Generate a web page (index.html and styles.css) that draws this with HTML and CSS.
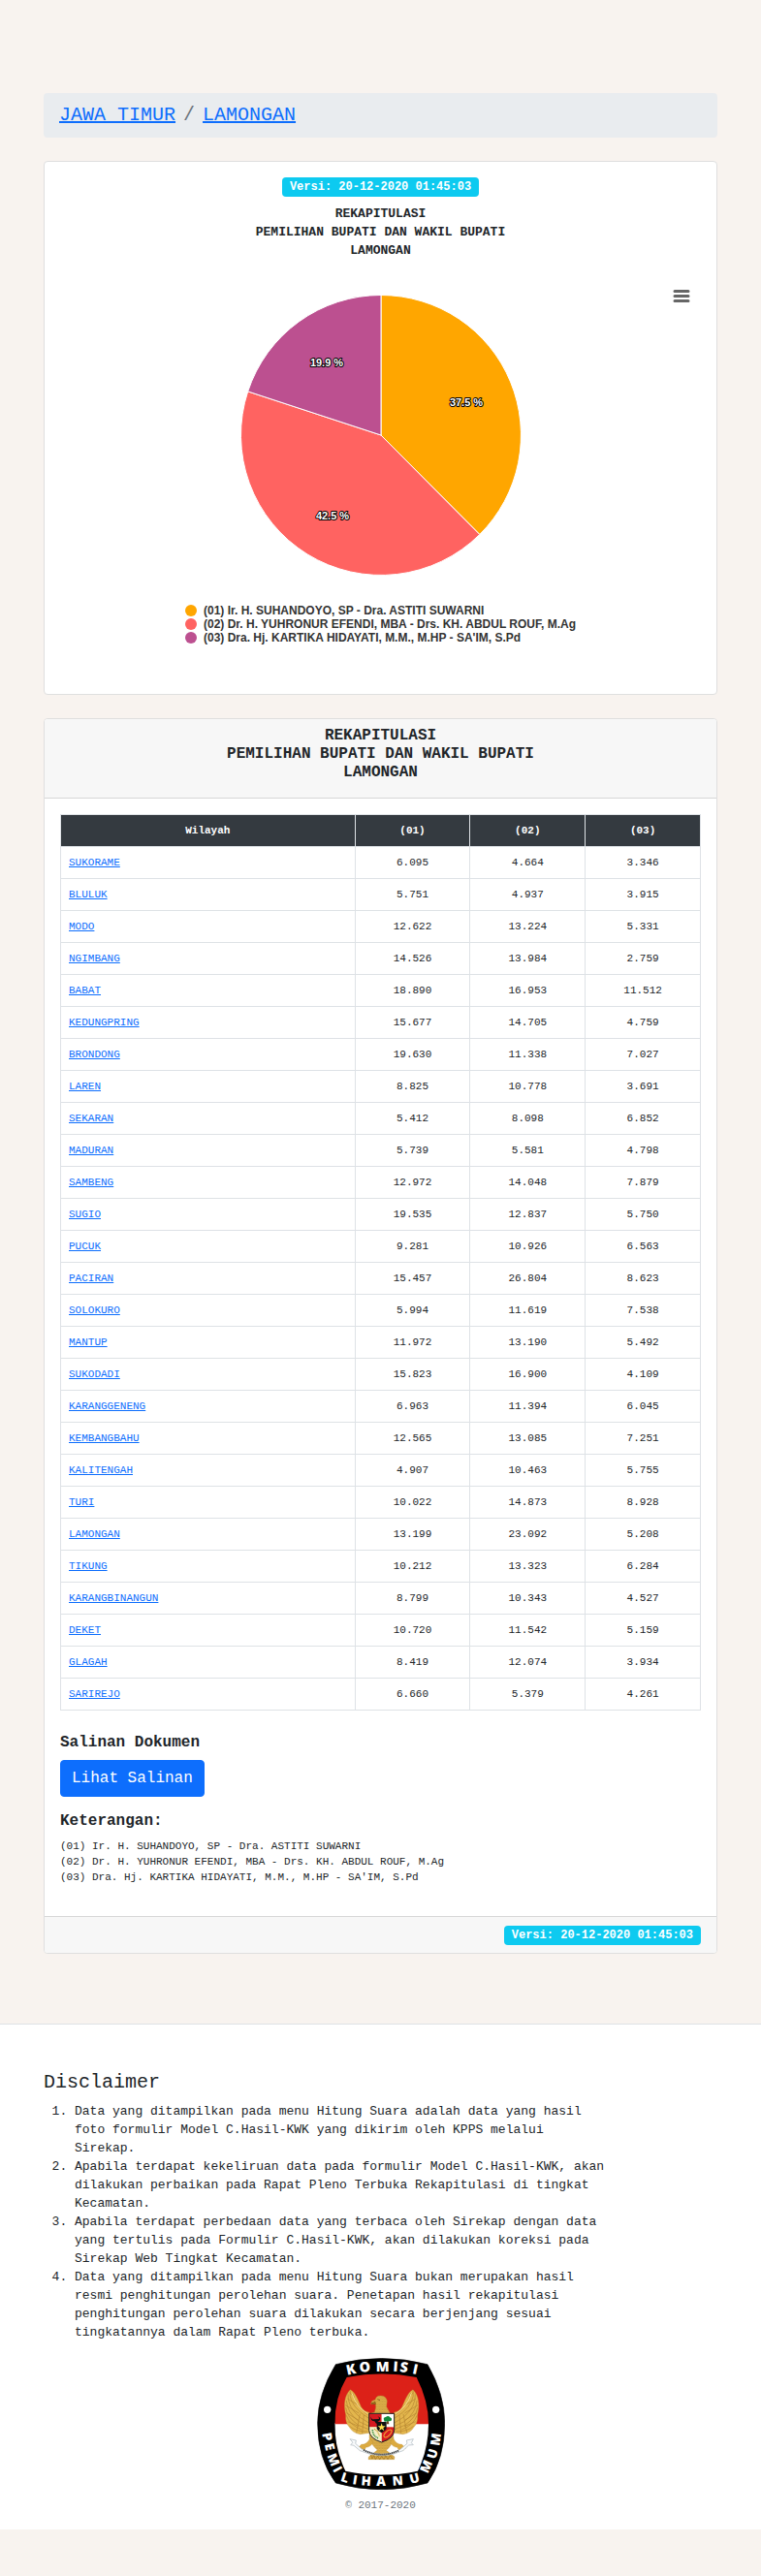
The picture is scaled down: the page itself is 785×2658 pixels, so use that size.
FILE: index.html
```html
<!DOCTYPE html>
<html lang="id">
<head>
<meta charset="utf-8">
<meta name="viewport" content="width=device-width, initial-scale=1">
<title>Rekapitulasi - Lamongan</title>
<link rel="stylesheet" href="styles.css">
</head>
<body>
<main class="container">
  <nav class="breadcrumb" aria-label="breadcrumb">
    <a href="#">JAWA TIMUR</a><span class="breadcrumb-sep">/</span><a href="#">LAMONGAN</a>
  </nav>

  <section class="card chart-card">
    <span class="badge">Versi: 20-12-2020 01:45:03</span>
    <h2 class="chart-title">REKAPITULASI<br>PEMILIHAN BUPATI DAN WAKIL BUPATI<br>LAMONGAN</h2>
    <div class="chart">
      <button class="chart-menu" type="button" aria-label="Menu">
        <svg width="18" height="14" viewBox="0 0 18 14"><path d="M2 1.500H16M2 6.500H16M2 11.500H16" stroke="#666" stroke-width="3" stroke-linecap="round"/></svg>
      </button>
      <svg class="pie" width="292" height="292" viewBox="0 0 292 292">
        <g stroke="#fff" stroke-width="1" stroke-linejoin="round">
          <path fill="#ffa600" d="M146 146V1.500A144.500 144.500 0 0 1 247.800 248.500Z"/>
          <path fill="#ff6361" d="M146 146L247.800 248.500A144.500 144.500 0 0 1 8.700 100.900Z"/>
          <path fill="#bc5090" d="M146 146L8.700 100.900A144.500 144.500 0 0 1 146 1.500Z"/>
        </g>
        <g class="pie-label" text-anchor="middle">
          <text x="234" y="116">37.5 %</text>
          <text x="96" y="233">42.5 %</text>
          <text x="90" y="75">19.9 %</text>
        </g>
      </svg>
      <ul class="legend">
        <li><span class="dot dot-1"></span>(01) Ir. H. SUHANDOYO, SP - Dra. ASTITI SUWARNI</li>
        <li><span class="dot dot-2"></span>(02) Dr. H. YUHRONUR EFENDI, MBA - Drs. KH. ABDUL ROUF, M.Ag</li>
        <li><span class="dot dot-3"></span>(03) Dra. Hj. KARTIKA HIDAYATI, M.M., M.HP - SA'IM, S.Pd</li>
      </ul>
    </div>
  </section>

  <section class="card">
    <header class="card-header">
      <h2 class="heading">REKAPITULASI<br>PEMILIHAN BUPATI DAN WAKIL BUPATI<br>LAMONGAN</h2>
    </header>
    <div class="card-body">
      <table class="results">
        <thead><tr><th class="col-area">Wilayah</th><th>(01)</th><th>(02)</th><th>(03)</th></tr></thead>
        <tbody>
          <tr><td><a href="#">SUKORAME</a></td><td>6.095</td><td>4.664</td><td>3.346</td></tr>
          <tr><td><a href="#">BLULUK</a></td><td>5.751</td><td>4.937</td><td>3.915</td></tr>
          <tr><td><a href="#">MODO</a></td><td>12.622</td><td>13.224</td><td>5.331</td></tr>
          <tr><td><a href="#">NGIMBANG</a></td><td>14.526</td><td>13.984</td><td>2.759</td></tr>
          <tr><td><a href="#">BABAT</a></td><td>18.890</td><td>16.953</td><td>11.512</td></tr>
          <tr><td><a href="#">KEDUNGPRING</a></td><td>15.677</td><td>14.705</td><td>4.759</td></tr>
          <tr><td><a href="#">BRONDONG</a></td><td>19.630</td><td>11.338</td><td>7.027</td></tr>
          <tr><td><a href="#">LAREN</a></td><td>8.825</td><td>10.778</td><td>3.691</td></tr>
          <tr><td><a href="#">SEKARAN</a></td><td>5.412</td><td>8.098</td><td>6.852</td></tr>
          <tr><td><a href="#">MADURAN</a></td><td>5.739</td><td>5.581</td><td>4.798</td></tr>
          <tr><td><a href="#">SAMBENG</a></td><td>12.972</td><td>14.048</td><td>7.879</td></tr>
          <tr><td><a href="#">SUGIO</a></td><td>19.535</td><td>12.837</td><td>5.750</td></tr>
          <tr><td><a href="#">PUCUK</a></td><td>9.281</td><td>10.926</td><td>6.563</td></tr>
          <tr><td><a href="#">PACIRAN</a></td><td>15.457</td><td>26.804</td><td>8.623</td></tr>
          <tr><td><a href="#">SOLOKURO</a></td><td>5.994</td><td>11.619</td><td>7.538</td></tr>
          <tr><td><a href="#">MANTUP</a></td><td>11.972</td><td>13.190</td><td>5.492</td></tr>
          <tr><td><a href="#">SUKODADI</a></td><td>15.823</td><td>16.900</td><td>4.109</td></tr>
          <tr><td><a href="#">KARANGGENENG</a></td><td>6.963</td><td>11.394</td><td>6.045</td></tr>
          <tr><td><a href="#">KEMBANGBAHU</a></td><td>12.565</td><td>13.085</td><td>7.251</td></tr>
          <tr><td><a href="#">KALITENGAH</a></td><td>4.907</td><td>10.463</td><td>5.755</td></tr>
          <tr><td><a href="#">TURI</a></td><td>10.022</td><td>14.873</td><td>8.928</td></tr>
          <tr><td><a href="#">LAMONGAN</a></td><td>13.199</td><td>23.092</td><td>5.208</td></tr>
          <tr><td><a href="#">TIKUNG</a></td><td>10.212</td><td>13.323</td><td>6.284</td></tr>
          <tr><td><a href="#">KARANGBINANGUN</a></td><td>8.799</td><td>10.343</td><td>4.527</td></tr>
          <tr><td><a href="#">DEKET</a></td><td>10.720</td><td>11.542</td><td>5.159</td></tr>
          <tr><td><a href="#">GLAGAH</a></td><td>8.419</td><td>12.074</td><td>3.934</td></tr>
          <tr><td><a href="#">SARIREJO</a></td><td>6.660</td><td>5.379</td><td>4.261</td></tr>
        </tbody>
      </table>
      <h3 class="heading">Salinan Dokumen</h3>
      <button class="btn" type="button">Lihat Salinan</button>
      <h3 class="heading">Keterangan:</h3>
      <p class="notes">(01) Ir. H. SUHANDOYO, SP - Dra. ASTITI SUWARNI<br>(02) Dr. H. YUHRONUR EFENDI, MBA - Drs. KH. ABDUL ROUF, M.Ag<br>(03) Dra. Hj. KARTIKA HIDAYATI, M.M., M.HP - SA'IM, S.Pd</p>
    </div>
    <footer class="card-footer"><span class="badge">Versi: 20-12-2020 01:45:03</span></footer>
  </section>
</main>

<footer class="site-footer">
  <div class="disclaimer">
    <h2 class="disclaimer-title">Disclaimer</h2>
    <ol class="disclaimer-list">
      <li>Data yang ditampilkan pada menu Hitung Suara adalah data yang hasil foto formulir Model C.Hasil-KWK yang dikirim oleh KPPS melalui Sirekap.</li>
      <li>Apabila terdapat kekeliruan data pada formulir Model C.Hasil-KWK, akan dilakukan perbaikan pada Rapat Pleno Terbuka Rekapitulasi di tingkat Kecamatan.</li>
      <li>Apabila terdapat perbedaan data yang terbaca oleh Sirekap dengan data yang tertulis pada Formulir C.Hasil-KWK, akan dilakukan koreksi pada Sirekap Web Tingkat Kecamatan.</li>
      <li>Data yang ditampilkan pada menu Hitung Suara bukan merupakan hasil resmi penghitungan perolehan suara. Penetapan hasil rekapitulasi penghitungan perolehan suara dilakukan secara berjenjang sesuai tingkatannya dalam Rapat Pleno terbuka.</li>
    </ol>
  </div>
  <div class="brand">
    <svg class="logo" width="132" height="136" viewBox="50 38 396 408" role="img" aria-label="Komisi Pemilihan Umum">
      <defs>
        <clipPath id="field"><path d="M142 98Q250 76 358 98Q395 170 395 242Q395 320 362 388Q250 412 138 388Q105 320 105 242Q105 160 142 98Z"/></clipPath>
        <clipPath id="shield"><path d="M211 210H289V262Q287 288 250 299Q213 288 211 262Z"/></clipPath>
        <pattern id="scales" width="8" height="8" patternUnits="userSpaceOnUse"><rect width="8" height="8" fill="#e3b64d"/><path d="M0 2Q4 8 8 2M-4 6Q0 12 4 6M4 6Q8 12 12 6" fill="none" stroke="#9d6f20" stroke-width="1"/></pattern>
      </defs>
      <path d="M108 58Q250 21 392 58Q445 150 445 240Q445 350 392 425Q250 466 108 425Q52 350 52 240Q52 150 108 58Z" fill="#000" stroke="#000" stroke-width="2" stroke-linejoin="round"/>
      <g clip-path="url(#field)"><path fill="#fff" d="M100 240H400V410H100Z"/><path fill="#dc2118" d="M100 80H400V243H100Z"/></g>
      <circle cx="82" cy="198" r="11" fill="#fff"/><circle cx="418" cy="198" r="11" fill="#fff"/>
      <g id="wing">
        <path d="M153 136C134 154 132 185 139 214Q137 238 150 252Q162 272 184 274L214 270L211 206Q196 204 187 190C179 174 172 147 153 136Z" fill="#e3b64d" stroke="#b58832" stroke-width="1"/>
        <path d="M153 139Q146 172 185 207L212 226M146 150Q144 190 183 222L212 240M141 170Q143 207 180 235L212 250M139 192Q143 222 178 246L212 260M141 216Q150 245 188 260M151 249Q169 266 206 266M160 146Q165 181 206 214M151 145L167 159M144 164L176 183M138 184L179 209M141 208L179 231M145 235L180 250M183 211L172 270M195 215L190 272" fill="none" stroke="#b58530" stroke-width="2"/>
        <path d="M158 147Q171 190 207 211" fill="none" stroke="#f7df94" stroke-width="3"/>
      </g>
      <use href="#wing" transform="translate(500) scale(-1 1)"/>
      <path d="M228 206Q235 188 230 179L217 181Q217 169 230 168Q233 154 247 155Q263 155 267 171L265 189L277 211L287 286Q280 312 264 324L290 344L289 352H209L210 344L237 323Q218 308 212 285L215 210Z" fill="url(#scales)" stroke="#b58832" stroke-width="1"/>
      <path d="M218 179L230 174L231 181ZM237 166L245 169" fill="#c38a22" stroke="#644310" stroke-width="2"/>
      <path d="M214 287Q205 306 187 306L176 318L185 314L183 325L191 319L196 326L201 315Q216 314 224 299ZM286 287Q295 306 313 306L324 318L315 314L317 325L309 319L304 326L299 315Q284 314 276 299Z" fill="#dbaa40" stroke="#b58832" stroke-width="1"/>
      <path d="M152 289L171 293L169 303L190 321Q250 350 306 322L329 303L327 293L348 289L342 301L348 307L334 308L316 325Q250 356 183 325L164 309L154 307L161 300Z" fill="#f8fafc" stroke="#a9b5bd" stroke-width="2"/>
      <path d="M194 323Q250 351 304 324" fill="none" stroke="#333" stroke-width="5" stroke-dasharray="4 2"/>
      <path d="M216 338L221 350L226 340L231 352L238 341L244 353L250 342L257 352L263 341L269 352L276 340L284 350" fill="none" stroke="#9d6f20" stroke-width="2"/>
      <g clip-path="url(#shield)">
        <path fill="#d71920" d="M211 210H250V252H211ZM250 252H290V300H250Z"/><path fill="#fff" d="M250 210H290V252H250Z"/><path fill="#f6efc7" d="M211 252H250V300H211Z"/>
        <path d="M217 219Q218 230 226 228L242 227Q242 220 237 218Q251 223 243 232L237 236L234 243L228 234Q214 234 217 219Z" fill="#111"/>
        <path d="M267 232H271L273 243H265Z" fill="#70451f"/><path d="M257 230Q254 222 263 221Q270 215 276 222Q285 226 279 233L259 235Z" fill="#128b3a"/>
        <ellipse cx="269" cy="272" rx="15" ry="7" transform="rotate(-45 269 272)" fill="none" stroke="#efad35" stroke-width="3"/>
        <path d="M222 260Q222 280 241 287" fill="none" stroke="#338b42" stroke-width="5" stroke-dasharray="3 2"/><path d="M227 258Q239 263 243 280" fill="none" stroke="#c9a32d" stroke-width="4" stroke-dasharray="3 2"/>
        <path d="M235 236H265V257Q262 265 250 270Q238 265 235 257Z" fill="#111"/>
        <path d="M250 240L253 249H262L255 255L258 264L250 258L242 264L245 255L238 249H247Z" fill="#ffe24a"/>
      </g>
      <path d="M211 210H289V262Q287 288 250 299Q213 288 211 262Z" fill="none" stroke="#222" stroke-width="3"/>
      <g class="logo-text">
        <text font-size="43" x="144 183 232 285 305 344" y="91 83 79 79 80 86" rotate="-12 -7 0 4 8 12">KOMISI</text>
        <text font-size="40" x="66 73 81 98 121 159 186 234 284 310 340 393 417 429" y="272 306 340 383 418 428 432 434 433 430 428 397 353 311" rotate="80 77 68 62 18 9 5 0 -4 0 -14 -66 -74 -82">PEMILIHAN UMUM</text>
      </g>
    </svg>
    <small class="copyright">© 2017-2020</small>
  </div>
</footer>
</body>
</html>
```
FILE: styles.css
```css
*, *::before, *::after { box-sizing: border-box; }

body {
  margin: 0;
  padding: 96px 0 48px;
  background: #f8f3ef;
  color: #212529;
  font: 16px/24px "Liberation Mono", monospace;
}

h2, h3, p, ol, ul { margin: 0; padding: 0; }

a { color: #0d6efd; text-decoration: underline; }

.container {
  display: flex;
  flex-direction: column;
  gap: 24px;
  padding: 0 45px;
}

.breadcrumb {
  padding: 8px 16px;
  border-radius: 4px;
  background: #e9ecef;
  font-size: 20px;
  line-height: 30px;
}

.breadcrumb-sep { padding: 0 8px; color: #6c757d; }

.card {
  border: 1px solid #dfdfdf;
  border-radius: 4px;
  background: #fff;
  overflow: hidden;
}

.badge {
  padding: 4px 8px;
  border-radius: 4px;
  background: #0dcaf0;
  color: #fff;
  font-size: 12px;
  font-weight: 700;
  line-height: 12px;
}

.chart-card {
  display: flex;
  flex-direction: column;
  align-items: center;
  gap: 8px;
  padding: 16px;
}

.chart-title { font-size: 13px; line-height: 19px; text-align: center; }

.chart {
  position: relative;
  display: flex;
  flex-direction: column;
  align-items: center;
  gap: 28px;
  width: 100%;
  padding: 27px 0 35px;
}

.chart-menu {
  position: absolute;
  top: 16px;
  right: 4px;
  display: grid;
  place-items: center;
  width: 32px;
  height: 28px;
  padding: 0;
  border: 0;
  background: none;
}

.pie-label {
  fill: #fff;
  stroke: #000;
  stroke-width: 2px;
  stroke-linejoin: round;
  paint-order: stroke;
  font: 700 11px "Liberation Sans", Arial, sans-serif;
}

.legend {
  list-style: none;
  color: #333;
  font: 700 12px/14px "Liberation Sans", Arial, sans-serif;
}

.legend li { display: flex; align-items: center; gap: 7px; }

.dot { width: 12px; height: 12px; border-radius: 50%; }
.dot-1 { background: #ffa600; }
.dot-2 { background: #ff6361; }
.dot-3 { background: #bc5090; }

.heading { margin-bottom: 8px; font-size: 16px; line-height: 19px; }

.card-header {
  padding: 8px 16px;
  border-bottom: 1px solid #d7d7d7;
  background: #f7f7f7;
  text-align: center;
}

.card-body { padding: 16px 16px 32px; }

.results {
  width: 100%;
  margin-bottom: 24px;
  border-collapse: collapse;
  table-layout: fixed;
  font-size: 11px;
  line-height: 16px;
  text-align: center;
}

.results th, .results td { padding: 8px; border: 1px solid #dee2e6; }
.results th { background: #343a40; color: #fff; }
.results td:first-child { text-align: left; }
.col-area { width: 46%; }

.btn {
  display: block;
  margin-bottom: 16px;
  padding: 6px 11px;
  border: 1px solid #0d6efd;
  border-radius: 4px;
  background: #0d6efd;
  color: #fff;
  font: inherit;
}

.notes { font-size: 11px; line-height: 16px; }

.card-footer {
  display: flex;
  align-items: center;
  justify-content: flex-end;
  min-height: 38px;
  padding: 8px 16px;
  border-top: 1px solid #d7d7d7;
  background: #f7f7f7;
}

.site-footer {
  margin-top: 72px;
  padding: 48px 45px 16px;
  border-top: 1px solid #dee2e6;
  background: #fff;
}

.disclaimer { width: 84%; }
.disclaimer-title { margin-bottom: 8px; font-size: 20px; font-weight: 400; line-height: 24px; }
.disclaimer-list { padding-left: 32px; font-size: 13px; line-height: 19px; }

.brand {
  display: flex;
  flex-direction: column;
  align-items: center;
  gap: 8px;
  padding-top: 17px;
}

.logo-text { fill: #fff; font-family: "Open Sans", sans-serif; font-weight: 800; }

.copyright { color: #6c757d; font-size: 11px; line-height: 17px; }
```
